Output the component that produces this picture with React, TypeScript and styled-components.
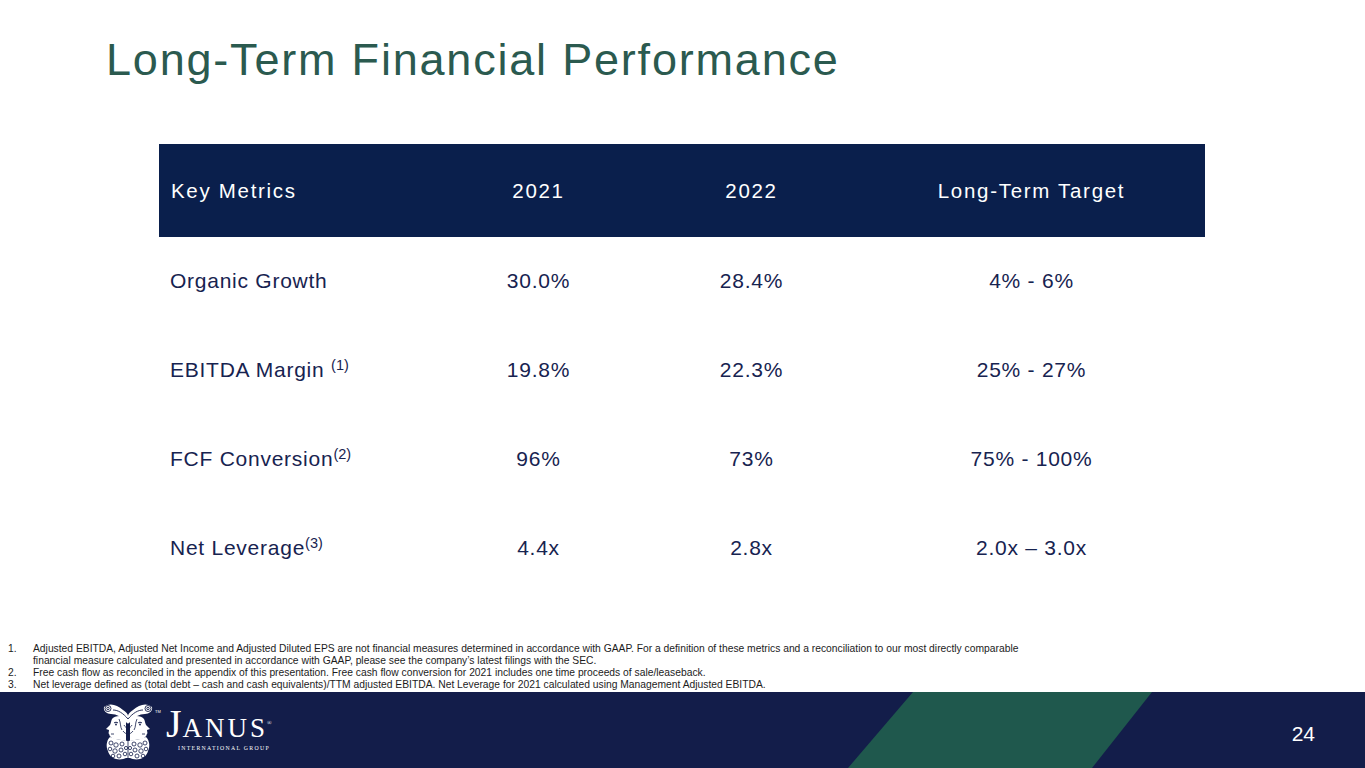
import React from "react";
import styled, { createGlobalStyle } from "styled-components";

const GlobalStyle = createGlobalStyle`
  html, body {
    margin: 0;
    padding: 0;
    background: #ffffff;
  }
  body {
    font-family: "Liberation Sans", Arial, sans-serif;
  }
`;

const rows = [
  { label: "Organic Growth", note: "", y21: "30.0%", y22: "28.4%", target: "4% - 6%" },
  { label: "EBITDA Margin ", note: "(1)", y21: "19.8%", y22: "22.3%", target: "25% - 27%" },
  { label: "FCF Conversion", note: "(2)", y21: "96%", y22: "73%", target: "75% - 100%" },
  { label: "Net Leverage", note: "(3)", y21: "4.4x", y22: "2.8x", target: "2.0x \u2013 3.0x" },
];

const notes = [
  {
    n: "1.",
    lines: [
      "Adjusted EBITDA, Adjusted Net Income and Adjusted Diluted EPS are not financial measures determined in accordance with GAAP. For a definition of these metrics and a reconciliation to our most directly comparable",
      "financial measure calculated and presented in accordance with GAAP, please see the company\u2019s latest filings with the SEC.",
    ],
  },
  {
    n: "2.",
    lines: [
      "Free cash flow as reconciled in the appendix of this presentation. Free cash flow conversion for 2021 includes one time proceeds of sale/leaseback.",
    ],
  },
  {
    n: "3.",
    lines: [
      "Net leverage defined as (total debt \u2013 cash and cash equivalents)/TTM adjusted EBITDA. Net Leverage for 2021 calculated using Management Adjusted EBITDA.",
    ],
  },
];

const Slide = styled.div`
  width: 1365px;
  height: 768px;
  display: flex;
  flex-direction: column;
  overflow: hidden;
  background: #ffffff;
`;

const Title = styled.h1`
  margin: 0;
  padding: 32px 0 0 106px;
  height: 110px;
  box-sizing: border-box;
  font-size: 45px;
  font-weight: 400;
  letter-spacing: 1.8px;
  color: #2b5a4f;
  line-height: 56px;
`;

const Table = styled.div`
  margin-left: 159px;
  margin-top: 34px;
  width: 1046px;
  display: grid;
  grid-template-columns: 273px 213px 213px 347px;
`;

const HeadCell = styled.div<{ $left?: boolean }>`
  background: #0a1f4c;
  height: 92px;
  display: flex;
  align-items: center;
  justify-content: ${({ $left }) => ($left ? "flex-start" : "center")};
  padding-left: ${({ $left }) => ($left ? "12px" : "0")};
  color: #ffffff;
  font-size: 20.5px;
  letter-spacing: 1.7px;
  padding-top: 1px;
`;

const Cell = styled.div<{ $left?: boolean }>`
  height: 89px;
  box-sizing: border-box;
  padding-bottom: 2px;
  display: flex;
  align-items: center;
  justify-content: ${({ $left }) => ($left ? "flex-start" : "center")};
  padding-left: ${({ $left }) => ($left ? "11px" : "0")};
  color: #172350;
  font-size: 21px;
  letter-spacing: 0.75px;
  white-space: pre;
`;

const Label = styled.span`
  line-height: 24px;
`;

const Sup = styled.sup`
  font-size: 14.5px;
  letter-spacing: 0;
  vertical-align: 7px;
  line-height: 0;
`;

const Spacer = styled.div`
  flex: 1;
`;

const Notes = styled.div`
  padding: 0 0 1px 8px;
  font-size: 10.3px;
  color: #1c1c1c;
  line-height: 12px;
`;

const Note = styled.div`
  display: flex;
`;

const NoteNum = styled.div`
  width: 25px;
  flex: none;
`;

const Footer = styled.div`
  position: relative;
  height: 76px;
  background: #131d4a;
  display: flex;
  align-items: center;
  flex: none;
`;

const Stripe = styled.div`
  position: absolute;
  top: 0;
  bottom: 0;
  left: 848px;
  width: 304px;
  background: #1f584d;
  clip-path: polygon(65px 0, 304px 0, 244px 100%, 0 100%);
`;

const Logo = styled.div`
  margin-left: 102px;
  margin-top: 2px;
  display: flex;
  align-items: flex-start;
  gap: 1px;
  position: relative;
`;

const Tm = styled.span`
  color: #ffffff;
  font-size: 4px;
  margin-top: 8px;
  width: 10px;
`;

const Wordmark = styled.div`
  display: flex;
  flex-direction: column;
  align-items: flex-start;
  color: #ffffff;
  font-family: "Liberation Serif", "Times New Roman", serif;
  margin-top: 5px;
`;

const Brand = styled.div`
  display: flex;
  align-items: baseline;
  line-height: 1;
  height: 40px;
`;

const BigJ = styled.span`
  font-size: 40px;
  line-height: 36px;
`;

const Rest = styled.span`
  font-size: 27px;
  letter-spacing: 3px;
  margin-left: 1px;
`;

const Reg = styled.span`
  font-size: 6px;
  align-self: flex-start;
  margin-top: 14px;
  margin-left: -1px;
`;

const Group = styled.div`
  font-size: 5.8px;
  letter-spacing: 1.3px;
  margin-left: 12px;
  margin-top: -1px;
`;

const PageNum = styled.div`
  position: absolute;
  right: 50px;
  top: 30px;
  color: #ffffff;
  font-size: 21px;
`;

const Face = () => (
  <g>
    {/* head profile facing outward */}
    <path
      d="M24 16 C18 14 12 15 10 18 C9 20 9 22 8 24 L4 28 L7 29 C7 31 6 32 7 33 C8 34 7 35 9 36 C10 38 12 38 14 38 L24 40 Z"
      fill="#ffffff"
    />
    <path d="M12 22 C13 21 15 21 16 22" stroke="#131d4a" strokeWidth="1" fill="none" />
    <circle cx="14" cy="23.5" r="0.9" fill="#131d4a" />
    <path d="M9 33 L12 33" stroke="#131d4a" strokeWidth="0.8" />
    <path d="M17 18 C19 22 18 26 20 29" stroke="#131d4a" strokeWidth="0.8" fill="none" />
    {/* curly beard */}
    <path
      d="M8 36 C4 40 4 46 6 50 C7 54 10 57 14 58 C18 59 22 58 24 57 L26 57 L26 40 L14 38 Z"
      fill="#ffffff"
    />
    <g stroke="#131d4a" strokeWidth="0.8" fill="none">
      <circle cx="9" cy="42" r="2" />
      <circle cx="14" cy="44" r="2.2" />
      <circle cx="20" cy="43" r="2" />
      <circle cx="8" cy="48" r="1.8" />
      <circle cx="13" cy="50" r="2.2" />
      <circle cx="19" cy="49" r="2" />
      <circle cx="24" cy="47" r="1.6" />
      <circle cx="11" cy="55" r="1.8" />
      <circle cx="17" cy="55" r="2" />
      <circle cx="23" cy="53" r="1.8" />
    </g>
  </g>
);

const Bust = () => (
  <svg width="52" height="60" viewBox="0 0 52 60">
    {/* capital with volutes */}
    <path
      d="M2 6 C8 1 15 4 21 9 C24 11 26 13 26 15 C26 13 28 11 31 9 C37 4 44 1 50 6 C51 10 47 13 43 13 C37 13 33 16 29 20 L26 23 L23 20 C19 16 15 13 9 13 C5 13 1 10 2 6 Z"
      fill="#ffffff"
    />
    <g stroke="#131d4a" strokeWidth="0.9" fill="none">
      <circle cx="6" cy="7.5" r="3" />
      <circle cx="6" cy="7.5" r="1.2" />
      <circle cx="46" cy="7.5" r="3" />
      <circle cx="46" cy="7.5" r="1.2" />
      <path d="M11 9 C16 9 21 12 26 18 C31 12 36 9 41 9" />
    </g>
    <Face />
    <g transform="translate(52,0) scale(-1,1)">
      <Face />
    </g>
    <path d="M26 22 L26 58" stroke="#131d4a" strokeWidth="0.8" />
    <path d="M22 24 C24 28 28 28 30 24 M21 30 C24 34 28 34 31 30" stroke="#131d4a" strokeWidth="0.8" fill="none" />
  </svg>
);

export default function App() {
  return (
    <Slide>
      <GlobalStyle />
      <Title>Long-Term Financial Performance</Title>
      <Table>
        <HeadCell $left>Key Metrics</HeadCell>
        <HeadCell>2021</HeadCell>
        <HeadCell>2022</HeadCell>
        <HeadCell>Long-Term Target</HeadCell>
        {rows.map((r) => (
          <React.Fragment key={r.label}>
            <Cell $left>
              <Label>
                {r.label}
                {r.note && <Sup>{r.note}</Sup>}
              </Label>
            </Cell>
            <Cell>{r.y21}</Cell>
            <Cell>{r.y22}</Cell>
            <Cell>{r.target}</Cell>
          </React.Fragment>
        ))}
      </Table>
      <Spacer />
      <Notes>
        {notes.map((n) => (
          <Note key={n.n}>
            <NoteNum>{n.n}</NoteNum>
            <div>
              {n.lines.map((l) => (
                <div key={l}>{l}</div>
              ))}
            </div>
          </Note>
        ))}
      </Notes>
      <Footer>
        <Stripe />
        <Logo>
          <Bust />
          <Tm>TM</Tm>
          <Wordmark>
            <Brand>
              <BigJ>J</BigJ>
              <Rest>ANUS</Rest>
              <Reg>®</Reg>
            </Brand>
            <Group>INTERNATIONAL GROUP</Group>
          </Wordmark>
        </Logo>
        <PageNum>24</PageNum>
      </Footer>
    </Slide>
  );
}
